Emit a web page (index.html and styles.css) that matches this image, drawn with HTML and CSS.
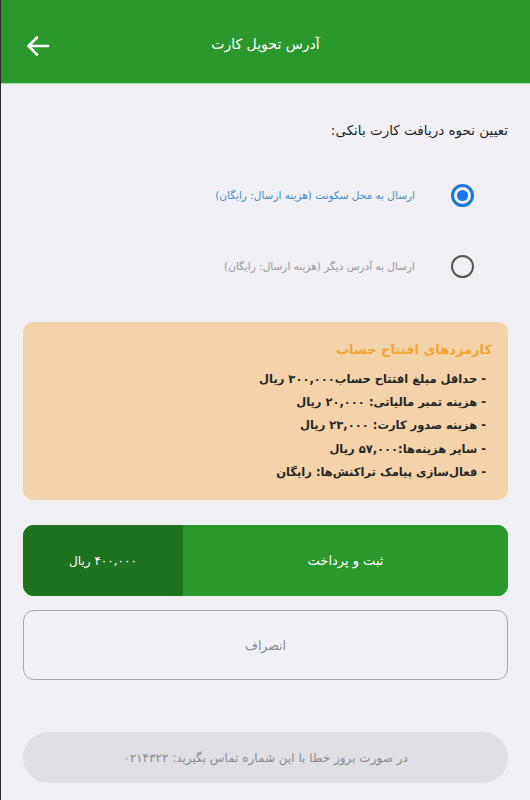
FILE: index.html
```html
<!DOCTYPE html>
<html lang="fa" dir="rtl">
<head>
<meta charset="utf-8">
<link rel="stylesheet" href="styles.css">
</head>
<body>
<div class="app">
  <header class="topbar">
    <span class="title">آدرس تحویل کارت</span>
    <span class="back">
      <svg width="24" height="22" viewBox="0 0 24 22"><path d="M22 11H3M11 2.5L2.5 11L11 19.5" fill="none" stroke="#fff" stroke-width="2.6" stroke-linecap="round" stroke-linejoin="round"/></svg>
    </span>
  </header>
  <main class="content">
    <p class="question">تعیین نحوه دریافت کارت بانکی:</p>
    <div class="options">
      <div class="option selected">
        <span class="radio"><span class="dot"></span></span>
        <span class="label">ارسال به محل سکونت (هزینه ارسال: رایگان)</span>
      </div>
      <div class="option">
        <span class="radio"></span>
        <span class="label">ارسال به آدرس دیگر (هزینه ارسال: رایگان)</span>
      </div>
    </div>
    <section class="fees">
      <h2 class="fees-title">کارمزدهای افتتاح حساب</h2>
      <ul class="fees-list">
        <li>- حداقل مبلغ افتتاح حساب۳۰۰,۰۰۰ ریال</li>
        <li>- هزینه تمبر مالیاتی: ۲۰,۰۰۰ ریال</li>
        <li>- هزینه صدور کارت: ۲۳,۰۰۰ ریال</li>
        <li>- سایر هزینه‌ها:۵۷,۰۰۰ ریال</li>
        <li>- فعال‌سازی پیامک تراکنش‌ها: رایگان</li>
      </ul>
    </section>
    <button class="pay">
      <span class="pay-label">ثبت و پرداخت</span>
      <span class="pay-amount">۴۰۰,۰۰۰ ریال</span>
    </button>
    <button class="cancel">انصراف</button>
    <div class="help">در صورت بروز خطا با این شماره تماس بگیرید: ۰۲۱۴۳۲۲</div>
  </main>
</div>
</body>
</html>
```
FILE: styles.css
```css
* { box-sizing: border-box; }
html, body { margin: 0; padding: 0; }
body {
  background: #efeff4;
  font-family: "DejaVu Sans", "Noto Sans", sans-serif;
  width: 530px;
  height: 800px;
  overflow: hidden;
}
.app {
  height: 800px;
  border-left: 1px solid #2b2b2b;
  background: #efeff4;
}
.topbar {
  height: 84px;
  background: #2a982c;
  border-bottom: 1px solid #a9e0a5;
  display: flex;
  align-items: center;
  justify-content: center;
  position: relative;
}
.title {
  color: #fff;
  font-size: 14px;
  margin-top: 4px;
}
.back {
  position: absolute;
  left: 25px;
  top: 35px;
  display: flex;
}
.content {
  padding: 0 22px 0 22px;
}
.question {
  margin: 35px 0 0 0;
  font-size: 13.5px;
  color: #1f1f1f;
  line-height: 22px;
}
.options {
  margin-top: 43px;
  display: flex;
  flex-direction: column;
  gap: 49px;
}
.option {
  display: flex;
  align-items: center;
  gap: 36px;
  padding-right: 34px;
  height: 22px;
}
.radio {
  width: 23px;
  height: 23px;
  border-radius: 50%;
  border: 2.5px solid #555;
  display: flex;
  align-items: center;
  justify-content: center;
  flex: none;
}
.option.selected .radio { border: 3px solid #1b78d8; }
.dot {
  width: 11px;
  height: 11px;
  border-radius: 50%;
  background: #1b78e8;
}
.label {
  font-size: 10.5px;
  color: #9a9a9a;
}
.option.selected .label { color: #3f8ec9; }
.fees {
  margin-top: 45px;
  background: #f4d3aa;
  border-radius: 10px;
  padding: 17px 16px 14px 16px;
  height: 178px;
}
.fees-title {
  margin: 0;
  font-size: 13px;
  font-weight: bold;
  color: #f1a531;
  line-height: 22px;
}
.fees-list {
  list-style: none;
  margin: 7px 0 0 0;
  padding: 0 6px 0 0;
}
.fees-list li {
  font-size: 11.5px;
  font-weight: bold;
  color: #262626;
  line-height: 23.2px;
}
.pay {
  margin-top: 25px;
  width: 100%;
  height: 71px;
  border: none;
  border-radius: 11px;
  overflow: hidden;
  display: flex;
  padding: 0;
  font-family: inherit;
  background: #2a982c;
}
.pay-label {
  flex: 1;
  display: flex;
  align-items: center;
  justify-content: center;
  color: #fff;
  font-size: 13px;
  background: #2a982c;
}
.pay-amount {
  width: 160px;
  display: flex;
  align-items: center;
  justify-content: center;
  color: #fff;
  font-size: 12px;
  background: #1e731f;
}
.cancel {
  margin-top: 14px;
  width: 100%;
  height: 70px;
  border: 1.5px solid #a8a8ab;
  border-radius: 11px;
  background: #f1f1f5;
  color: #8a8a8a;
  font-family: inherit;
  font-size: 12.5px;
  display: flex;
  align-items: center;
  justify-content: center;
}
.help {
  margin-top: 52px;
  height: 51px;
  border-radius: 26px;
  background: #e0e0e4;
  color: #8a8a8a;
  font-size: 12px;
  display: flex;
  align-items: center;
  justify-content: center;
}
```
